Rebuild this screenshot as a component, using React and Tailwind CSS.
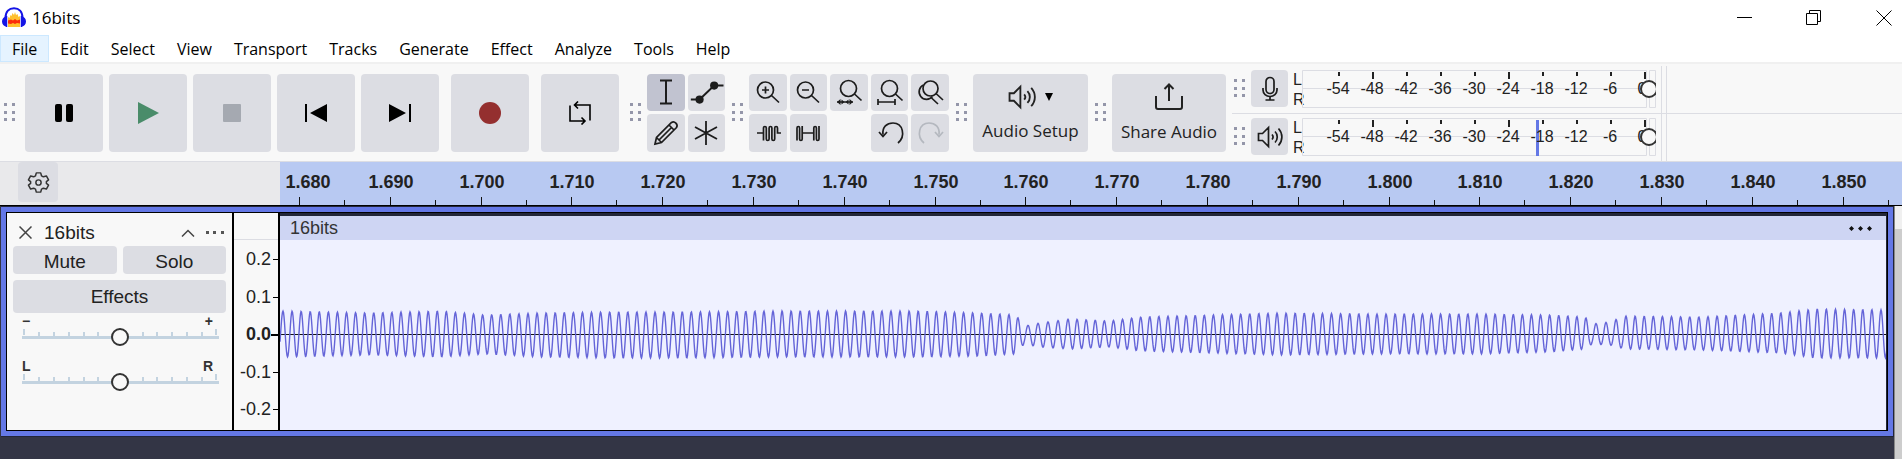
import React from "react";

const MENUS = ["File", "Edit", "Select", "View", "Transport", "Tracks", "Generate", "Effect", "Analyze", "Tools", "Help"];

// peak positions of the tone: [x, cycle number]
const PHASE = [[-7, -1], [3, 0], [738, 81], [788, 86], [1306, 143], [1346, 147], [1601, 175], [1619, 177]];

// envelope: [x, height above zero, depth below zero]
const ENVELOPE = [
  [0, 24, 22], [50, 23, 21], [90, 22, 20], [160, 24, 22], [205, 20, 19], [260, 22, 22],
  [330, 23, 23], [400, 23, 23], [500, 24, 22], [640, 24, 22], [700, 22, 21], [736, 20, 19],
  [744, 9, 9], [760, 12, 12], [790, 16, 14], [830, 14, 12], [860, 18, 16], [1000, 22, 20],
  [1100, 21, 19], [1200, 21, 19], [1270, 20, 17], [1305, 18, 14], [1312, 11, 9], [1330, 13, 10],
  [1345, 19, 14], [1420, 18, 15], [1500, 22, 18], [1535, 26, 23], [1618, 25, 23],
];

function lerp(table, x, col) {
  for (let i = 1; i < table.length; i++) {
    const a = table[i - 1];
    const b = table[i];
    if (x <= b[0]) return a[col] + ((b[col] - a[col]) * (x - a[0])) / (b[0] - a[0]);
  }
  return table[table.length - 1][col];
}

function wavePath() {
  const pts = [];
  for (let x = 0; x <= 1618; x += 0.5) {
    const s = Math.cos(lerp(PHASE, x, 1) * Math.PI * 2);
    const amp = s > 0 ? lerp(ENVELOPE, x, 1) : lerp(ENVELOPE, x, 2);
    pts.push(`${x},${(95 - s * amp).toFixed(1)}`);
  }
  return "M" + pts.join("L");
}

const WAVE = wavePath();

function Icon({ size = "size-6", children }) {
  return (
    <svg viewBox="0 0 24 24" className={`${size} overflow-visible`} fill="none" stroke="currentColor" strokeWidth="1.700" aria-hidden="true">
      {children}
    </svg>
  );
}

function Grip() {
  return (
    <svg width="12" height="20" className="shrink-0" fill="#9496a9" aria-hidden="true">
      {[0, 8, 15].map((y) => (
        <g key={y}>
          <rect x="0" y={y} width="3" height="3" />
          <rect x="8" y={y} width="3" height="3" />
        </g>
      ))}
    </svg>
  );
}

function BigButton({ label, children }) {
  return (
    <button aria-label={label} className="flex size-[78px] shrink-0 items-center justify-center rounded bg-[#dcdde3] text-black">
      {children}
    </button>
  );
}

function ToolButton({ label, active, disabled, children }) {
  return (
    <button
      aria-label={label}
      disabled={disabled}
      className={`flex items-center justify-center rounded ${active ? "bg-[#c1c3d0]" : "bg-[#dcdde3]"} ${disabled ? "text-[#b4b8bf]" : "text-[#1c1c1c]"}`}
    >
      {children}
    </button>
  );
}

function SpeakerIcon({ size }) {
  return (
    <Icon size={size}>
      <path d="M0.500 8.500h4l6-6v19l-6-6h-4zM14 9.500c1.300 1.500 1.300 3.500 0 5M17 6.500c3 3 3 8 0 11M20.500 3.500c4.500 5 4.500 12 0 17" />
    </Icon>
  );
}

function MicIcon() {
  return (
    <Icon>
      <rect x="8" y="0.500" width="8" height="16" rx="4" />
      <path d="M5 11v2a7 6.500 0 0 0 14 0v-2M12 19.500v3M7.500 23h9" />
    </Icon>
  );
}

const LEVELS = ["-54", "-48", "-42", "-36", "-30", "-24", "-18", "-12", "-6", "0"];

function Meter({ label, icon, peak }) {
  return (
    <div className="flex h-[47px] items-start gap-[5px] pt-1">
      <div className="pt-[9px]">
        <Grip />
      </div>
      <button aria-label={label} className="flex size-[37px] shrink-0 items-center justify-center rounded bg-[#dcdde3] text-[#1c1c1c]">
        {icon}
      </button>
      <div className="flex">
        <div className="flex w-[9px] flex-col text-base leading-5 text-[#222]">
          <span>L</span>
          <span>R</span>
        </div>
        <div className="relative">
          <svg width="354" height="39" className="block text-base">
            <path d="M0.500 0.500h344v37h-344zM347.500 0.500h6v37h-6zM1 18.500h343" fill="none" stroke="#dcdde3" />
            {peak && <rect x="234" y="2" width="3" height="36" fill="#6478e6" />}
            {LEVELS.map((level, i) => {
              const x = 37 + i * 34;
              const major = level === "-48" || level === "-24" || level === "0";
              return (
                <g key={level}>
                  <rect x={x - 1} y="2" width="2" height={major ? 7 : 4} fill="#222" />
                  <text x={level === "0" ? x - 3 : x - 1} y="24" textAnchor="middle" fill="#222">
                    {level}
                  </text>
                </g>
              );
            })}
          </svg>
          <div className="absolute top-[9px] right-0 h-5 w-full overflow-hidden">
            <input
              type="range"
              aria-label={`${label} volume`}
              defaultValue="100"
              className="absolute top-0 left-0 h-5 w-[356px] appearance-none bg-transparent [&::-webkit-slider-thumb]:size-[18px] [&::-webkit-slider-thumb]:appearance-none [&::-webkit-slider-thumb]:rounded-full [&::-webkit-slider-thumb]:border-2 [&::-webkit-slider-thumb]:border-[#333] [&::-webkit-slider-thumb]:bg-[#f8f8f8]"
            />
          </div>
        </div>
      </div>
    </div>
  );
}

function TrackSlider({ label, left, right }) {
  return (
    <div className="relative h-[45px] px-[9px]">
      <div className="flex h-[13px] justify-between pr-1 text-sm leading-[13px] font-bold text-[#333]">
        <span>{left}</span>
        <span>{right}</span>
      </div>
      <svg width="197" height="12" className="block" fill="#c3d3e0" aria-hidden="true">
        <rect y="8" width="197" height="3" />
        {[1, 16, 31, 46, 61, 75, 120, 134, 149, 164, 179, 193].map((x) => (
          <rect key={x} x={x} y={x === 1 || x === 193 ? 1 : 4} width="2" height="6" />
        ))}
      </svg>
      <input
        type="range"
        aria-label={label}
        defaultValue="50"
        className="absolute top-3 left-[9px] h-5 w-[196px] appearance-none bg-transparent [&::-webkit-slider-thumb]:size-[18px] [&::-webkit-slider-thumb]:appearance-none [&::-webkit-slider-thumb]:rounded-full [&::-webkit-slider-thumb]:border-2 [&::-webkit-slider-thumb]:border-[#333] [&::-webkit-slider-thumb]:bg-[#f8f8f8]"
      />
    </div>
  );
}

function TitleBar() {
  return (
    <header className="flex h-[35px] items-center justify-between pr-[10px] pl-[2px]">
      <div className="flex items-center gap-[6px]">
        <svg width="24" height="22" viewBox="0 0 24 22" fill="none" aria-hidden="true">
          <path d="M6 20V10l1.500 1 1-3 1 1 1-3 1.500 2 1-3 1 3 1.500-1 1 3 1.500-1v11z" fill="#ffc02e" />
          <path d="M6 13.500l3-1 2 1 2-1.500 2 1.500 3-1v4l-3-.5-2 1-2-1-2 1-3-.5z" fill="#fb2b0b" />
          <path d="M3.500 11C3.500 4.500 7 1.200 12 1.200s8.500 3.300 8.500 9.800" stroke="#1414e6" strokeWidth="2" />
          <path d="M4 9.500v10c-2-.3-4-2-4-5s2-4.500 4-5zM20 9.500v10c2-.3 4-2 4-5s-2-4.500-4-5z" fill="#1414e6" />
          <path d="M4.500 9v11M19.500 9v11" stroke="#1414e6" strokeWidth="1.500" />
        </svg>
        <h1 className="font-['Open_Sans',sans-serif] text-[17px] text-black">16bits</h1>
      </div>
      <div className="flex items-center gap-[54px]">
        <button aria-label="Minimize">
          <svg width="16" height="16" className="block" aria-hidden="true">
            <path d="M1 7.500h15" stroke="#000" />
          </svg>
        </button>
        <button aria-label="Restore">
          <svg width="16" height="16" className="block" fill="none" stroke="#000" aria-hidden="true">
            <path d="M0.500 3.500h11v11h-11zM3.500 3.500v-3h11v11h-3" />
          </svg>
        </button>
        <button aria-label="Close">
          <svg width="16" height="16" className="block" aria-hidden="true">
            <path d="M0.500 0.500l15 15M15.500 0.500l-15 15" stroke="#000" />
          </svg>
        </button>
      </div>
    </header>
  );
}

function Toolbar() {
  return (
    <div className="flex h-[98px] items-stretch border-b border-[#dcdde3] bg-[#f8f8f8]">
      <div className="flex items-center gap-[6px] pl-1">
        <div className="mr-[3px]">
          <Grip />
        </div>
        <BigButton label="Pause">
          <svg width="18" height="18" aria-hidden="true">
            <rect width="7" height="18" rx="2" />
            <rect x="11" width="7" height="18" rx="2" />
          </svg>
        </BigButton>
        <BigButton label="Play">
          <svg width="22" height="22" fill="#4a8c6a" aria-hidden="true">
            <path d="M1 0l21 11L1 22z" />
          </svg>
        </BigButton>
        <BigButton label="Stop">
          <svg width="18" height="18" fill="#a5a9b1" aria-hidden="true">
            <rect width="18" height="18" rx="1" />
          </svg>
        </BigButton>
        <BigButton label="Skip to start">
          <svg width="22" height="18" aria-hidden="true">
            <path d="M0 0h2v18H0zM22 0v18L5 9z" />
          </svg>
        </BigButton>
        <BigButton label="Skip to end">
          <svg width="22" height="18" aria-hidden="true">
            <path d="M20 0h2v18h-2zM0 0v18l17-9z" />
          </svg>
        </BigButton>
        <div className="px-[6px]">
          <BigButton label="Record">
            <svg width="22" height="22" fill="#942f2f" aria-hidden="true">
              <circle cx="11" cy="11" r="11" />
            </svg>
          </BigButton>
        </div>
        <BigButton label="Loop">
          <svg width="24" height="24" viewBox="0 0 24 24" fill="none" stroke="currentColor" strokeWidth="1.600" aria-hidden="true">
            <path d="M10 0.500L6.500 4 10 7.500M7 4h15v15.500M2 4.500v15.500h15M13.500 16.500L17 20l-3.500 3.500" />
          </svg>
        </BigButton>
      </div>

      <div className="ml-[11px] flex items-center gap-[5px]">
        <Grip />
        <div className="grid h-[78px] w-[78px] grid-cols-2 grid-rows-2 gap-[3px]">
          <ToolButton label="Selection tool" active>
            <Icon>
              <path d="M6 0.500h12M6 23.500h12M12 0.500v23" strokeWidth="2" />
            </Icon>
          </ToolButton>
          <ToolButton label="Envelope tool">
            <Icon size="size-7">
              <path d="M-1 18.500h7.500L19 6.500h8" />
              <circle cx="6.500" cy="18.500" r="3.500" fill="currentColor" stroke="none" />
              <circle cx="19" cy="6.500" r="3.500" fill="currentColor" stroke="none" />
            </Icon>
          </ToolButton>
          <ToolButton label="Draw tool">
            <Icon>
              <path d="M1 23l1.500-6.500L17.500 1.500c3-2 7 2 5 5L7.500 21.500zM2.500 16.500l5 5M15 4l5 5M17.500 6.500l-12.500 12.500" />
            </Icon>
          </ToolButton>
          <ToolButton label="Multi-tool">
            <Icon>
              <path d="M12 0v24M1 6l22 12M23 6L1 18" strokeWidth="1.800" />
            </Icon>
          </ToolButton>
        </div>
      </div>

      <div className="ml-[7px] flex items-center gap-[5px]">
        <Grip />
        <div className="grid h-[78px] w-[200px] grid-cols-5 grid-rows-2 gap-[3px]">
          <ToolButton label="Zoom in">
            <Icon>
              <circle cx="9.500" cy="10" r="8" />
              <path d="M15.500 15.500l7.500 7M9.500 6.500v7M6 10h7" />
            </Icon>
          </ToolButton>
          <ToolButton label="Zoom out">
            <Icon>
              <circle cx="9.500" cy="10" r="8" />
              <path d="M15.500 15.500l7.500 7M6 10h7" />
            </Icon>
          </ToolButton>
          <ToolButton label="Fit selection to width">
            <Icon>
              <circle cx="11.500" cy="8.500" r="8" />
              <path d="M17.500 14l7 6.500M0 22h16" />
              <path d="M3.500 19L0 22l3.500 3zM12.500 19l3.500 3-3.500 3zM4.500 19.500L7.500 22l-3 2.500zM11.500 19.500L8.500 22l3 2.500z" fill="currentColor" stroke="none" />
            </Icon>
          </ToolButton>
          <ToolButton label="Fit project to width">
            <Icon>
              <circle cx="11.500" cy="8.500" r="8" />
              <path d="M17.500 14l7 6.500M0 22h17M0 19v6M17 19v6" />
            </Icon>
          </ToolButton>
          <ToolButton label="Zoom toggle">
            <Icon>
              <circle cx="12.500" cy="8.500" r="7.500" />
              <path d="M18 13.500l7 6.500M5.500 5a7.500 7.500 0 1 0 9 11.500M12.500 17l7.500 7" />
            </Icon>
          </ToolButton>
          <ToolButton label="Trim audio outside selection">
            <Icon>
              <path d="M1 12h6.500M7.500 19.500V7q0-1.500 1.400-1.500T10.300 7v11q0 1.500 1.400 1.500t1.400-1.500V7q0-1.500 1.400-1.500T15.900 7v11q0 1.500 1.400 1.500t1.400-1.500V7q0-1.500 1.400-1.500T21.500 7v5H25" />
            </Icon>
          </ToolButton>
          <ToolButton label="Silence audio selection">
            <Icon>
              <path d="M1 19.500V7q0-1.500 1.300-1.500T3.600 7v11q0 1.500 1.300 1.500T6.200 18V5M6.200 12h11.600M17.800 19.500V7q0-1.500 1.300-1.500T20.400 7v11q0 1.500 1.300 1.500T23 18V5" />
            </Icon>
          </ToolButton>
          <div />
          <ToolButton label="Undo">
            <Icon>
              <path d="M5 13.500C4 6 9 2 15 2c10 0 13 13 5 20M1 11l4 4.500 4-4.500" />
            </Icon>
          </ToolButton>
          <ToolButton label="Redo" disabled>
            <Icon>
              <path d="M21 13.500C22 6 17 2 11 2 1 2-2 15 6 22M17 11l4 4.500 4-4.500" />
            </Icon>
          </ToolButton>
        </div>
      </div>

      <div className="ml-[7px] flex items-center gap-[5px]">
        <Grip />
        <button className="flex h-[78px] w-[115px] flex-col items-center justify-between rounded bg-[#dcdde3] pt-[10px] pb-[11px] text-[#222]">
          <span className="flex items-center gap-[10px]">
            <SpeakerIcon size="size-[26px]" />
            <svg width="8" height="8" aria-hidden="true">
              <path d="M0 0h8L4 8z" />
            </svg>
          </span>
          <span className="font-['Open_Sans',sans-serif] text-[17px] leading-5">Audio Setup</span>
        </button>
      </div>

      <div className="ml-[7px] flex items-center gap-[5px]">
        <Grip />
        <button className="flex h-[78px] w-[114px] flex-col items-center justify-between rounded bg-[#dcdde3] pt-[9px] pb-[10px] text-[#222]">
          <svg width="28" height="28" viewBox="0 0 28 28" fill="none" stroke="currentColor" strokeWidth="2" aria-hidden="true">
            <path d="M1 13v11q0 2 2 2h22q2 0 2-2V13M14 18V2M9.500 6L14 1.500 18.500 6" />
          </svg>
          <span className="font-['Open_Sans',sans-serif] text-[17px] leading-5">Share Audio</span>
        </button>
      </div>

      <div className="ml-[6px] flex flex-1 flex-col pt-[2px]">
        <div className="relative flex flex-1 flex-col">
          <div className="border-b border-[#dcdde3] pl-[2px]">
            <Meter label="Record meter" icon={<MicIcon />} />
          </div>
          <div className="pl-[2px]">
            <Meter label="Playback meter" icon={<SpeakerIcon size="size-6" />} peak />
          </div>
          <div className="absolute top-0 bottom-0 left-[429px] w-[6px] border-x border-[#dcdde3]" />
        </div>
      </div>
    </div>
  );
}

const TIMES = Array.from({ length: 18 }, (_, i) => (1.68 + i * 0.01).toFixed(3));

function Timeline() {
  return (
    <div className="flex h-[43px] bg-[#e9e9eb]">
      <div className="w-[280px] shrink-0 pl-[18px]">
        <button aria-label="Timeline options" className="flex size-10 items-center justify-center rounded bg-[#dcdde3] text-[#333]">
          <Icon size="size-[21px]">
            <path d="M9.500 1h5l1 3.500 2 1L21 4.500l2.500 4.500-2.500 2v2l2.500 2-2.500 4.500-3.500-1-2 1-1 3.500h-5l-1-3.500-2-1L3 19.500.5 15 3 13v-2L.5 9 3 4.500l3.500 1 2-1z" strokeLinejoin="round" />
            <circle cx="12" cy="12" r="3" />
          </Icon>
        </button>
      </div>
      <svg className="h-full min-w-0 flex-1 bg-[#b8c9f2] text-lg font-bold" aria-label="Timeline">
        {TIMES.map((time, i) => {
          const x = Math.round(19 + i * 90.8);
          return (
            <g key={time} fill="#111">
              <rect x={x} y="35" width="1" height="8" />
              <rect x={x + 45} y="38" width="1" height="5" />
              <text x={i === 0 ? 28 : x + 1} y="26" textAnchor="middle" fill="#222">
                {time}
              </text>
            </g>
          );
        })}
      </svg>
    </div>
  );
}

function TrackPanel() {
  return (
    <section aria-label="Track controls" className="w-[227px] shrink-0 border-r-2 border-black bg-[#f8f8f8] px-[6px] pt-[6px] text-[#222]">
      <div className="flex h-[27px] items-center">
        <button aria-label="Close track" className="ml-[6px]">
          <svg width="13" height="13" className="block" aria-hidden="true">
            <path d="M0.500 0.500l12 12M12.500 0.500l-12 12" stroke="#444" strokeWidth="1.500" />
          </svg>
        </button>
        <h2 className="ml-3 flex-1 text-[19px] leading-6">16bits</h2>
        <button aria-label="Collapse track">
          <svg width="14" height="8" className="block" fill="none" aria-hidden="true">
            <path d="M1 7.500l6-6 6 6" stroke="#444" strokeWidth="1.500" />
          </svg>
        </button>
        <button aria-label="Track menu" className="mr-[2px] ml-[11px]">
          <svg width="18" height="4" className="block" fill="#555" aria-hidden="true">
            <path d="M0 0h3v3H0zM7 0h3v3H7zM15 0h3v3h-3z" />
          </svg>
        </button>
      </div>
      <div className="grid grid-cols-2 gap-[6px] text-[19px]">
        <button className="h-7 rounded bg-[#dcdde3] pt-[2px] leading-7">Mute</button>
        <button className="h-7 rounded bg-[#dcdde3] pt-[2px] leading-7">Solo</button>
        <button className="col-span-2 h-[33px] rounded bg-[#dcdde3] leading-[33px]">Effects</button>
      </div>
      <div className="mt-[2px]">
        <TrackSlider label="Gain" left="−" right="+" />
        <TrackSlider label="Pan" left="L" right="R" />
      </div>
    </section>
  );
}

function VerticalRuler() {
  return (
    <svg width="46" className="h-full shrink-0 border-r-2 border-black bg-[#f8f8f8] text-lg" fill="#222" aria-label="Amplitude">
      <rect y="26" width="45" height="1" fill="#dcdde3" />
      {["0.2", "0.1", "0.0", "-0.1", "-0.2"].map((value, i) => {
        const zero = value === "0.0";
        const y = Math.round(46 + i * 37.5);
        return (
          <g key={value}>
            <text x="37" y={y + 6} textAnchor="end" fontWeight={zero ? 700 : 400}>
              {value}
            </text>
            <rect x={zero ? 37 : 39} y={y} width={zero ? 8 : 5} height={zero ? 2 : 1} fill="#000" />
          </g>
        );
      })}
    </svg>
  );
}

function Track() {
  return (
    <main className="flex flex-1 bg-[#333545]">
      <div className="min-w-0 flex-1 pl-px">
        <div className="border-y border-r border-[#222638] bg-[#6478e6] p-[5px]">
          <div className="flex h-[219px] border border-black bg-black">
            <TrackPanel />
            <VerticalRuler />
            <div className="flex min-w-0 flex-1 flex-col border-t-[3px] border-r border-[#222638]">
              <div className="flex h-6 shrink-0 items-center justify-between bg-[#ced5f3] pr-[13px] pl-[10px] text-lg leading-6 text-[#333]">
                <span>16bits</span>
                <button aria-label="Clip menu">
                  <svg width="24" height="5" className="block" fill="#111" aria-hidden="true">
                    <path d="M2.500 0L5 2.500 2.500 5 0 2.500zM11.500 0L14 2.500 11.500 5 9 2.500zM20.500 0L23 2.500 20.500 5 18 2.500z" />
                  </svg>
                </button>
              </div>
              <svg className="min-h-0 w-full flex-1 bg-[#eff1ff]" aria-label="Waveform">
                <rect y="94" width="100%" height="1" fill="#111" />
                <path d={WAVE} fill="none" stroke="#6464d8" strokeWidth="1.400" />
              </svg>
            </div>
          </div>
        </div>
      </div>
      <div className="w-2 border-l border-[#888] bg-[#cdcdcd]">
        <div className="h-[23px] bg-[#f0f0f0]" />
      </div>
    </main>
  );
}

export default function App() {
  return (
    <div className="flex min-h-screen flex-col overflow-hidden bg-white font-['Liberation_Sans',Arial,sans-serif]">
      <TitleBar />
      <nav className="flex h-[29px] border-b-2 border-[#f0f0f0] font-['Open_Sans',sans-serif] text-base text-black">
        {MENUS.map((menu) => (
          <button
            key={menu}
            className={`px-[11px] pt-px ${menu === "File" ? "border border-[#cce8ff] bg-[#e5f3ff]" : ""}`}
          >
            {menu}
          </button>
        ))}
      </nav>
      <Toolbar />
      <Timeline />
      <div className="h-px bg-black" />
      <Track />
    </div>
  );
}
